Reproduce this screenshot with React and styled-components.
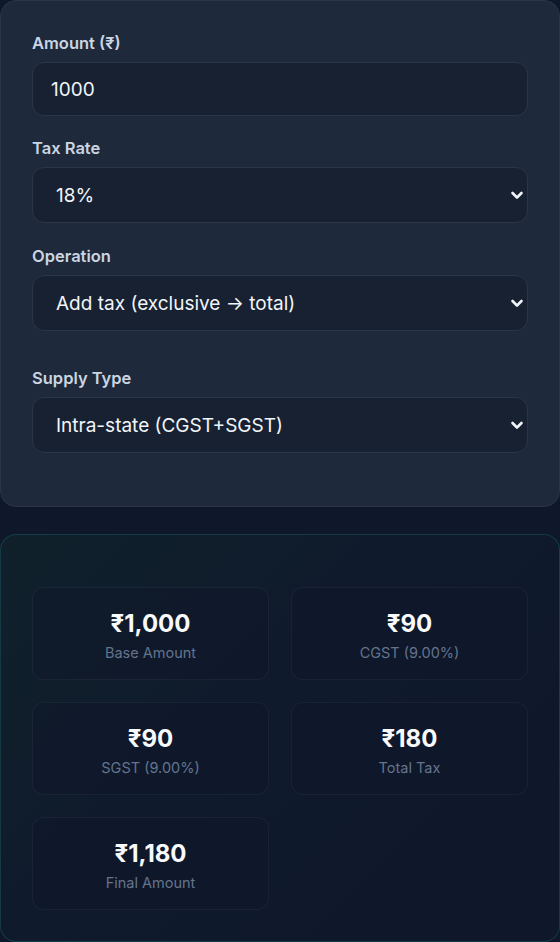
import React, { useState } from 'react'
import styled, { createGlobalStyle } from 'styled-components'

const Global = createGlobalStyle`
  html, body { margin: 0; padding: 0; background: #0f172a; }
  body { font-family: Inter, "Noto Sans", "Liberation Sans", sans-serif; }
  * { box-sizing: border-box; }
`

const Page = styled.div`
  width: 560px;
  min-height: 942px;
  display: flex;
  flex-direction: column;
  gap: 27px;
  background: #0f172a;
`

const FormCard = styled.div`
  background: #1e293b;
  border: 1px solid #2a3547;
  border-radius: 16px;
  padding: 31px 31px 53px;
  display: flex;
  flex-direction: column;
`

const Field = styled.div`
  display: flex;
  flex-direction: column;
  gap: 8px;
  margin-top: ${p => p.$mt || 0}px;
`

const Label = styled.label`
  font-size: 16.5px;
  font-weight: 600;
  color: #cbd5e1;
  line-height: 22px;
`

const Input = styled.input`
  height: 54px;
  width: 100%;
  background: #182131;
  border: 1px solid #2a3547;
  border-radius: 12px;
  color: #f1f5f9;
  font-family: inherit;
  font-size: 19px;
  padding: 0 18px;
  outline: none;
`

const SelectWrap = styled.div`
  position: relative;
`

const Select = styled.select`
  appearance: none;
  height: 56px;
  width: 100%;
  background: #182131;
  border: 1px solid #2a3547;
  border-radius: 12px;
  color: #f1f5f9;
  font-family: inherit;
  font-size: 19px;
  padding: 0 40px 0 23px;
  outline: none;
`

const Chevron = styled.svg`
  position: absolute;
  right: 1px;
  top: 50%;
  transform: translateY(-50%);
  pointer-events: none;
`

const ResultCard = styled.div`
  border: 1px solid rgba(45, 212, 191, 0.18);
  border-radius: 16px;
  background: linear-gradient(135deg, #10212b 0%, #0f1a2c 45%, #0f172a 100%);
  padding: 52px 31px 31px;
`

const Grid = styled.div`
  display: grid;
  grid-template-columns: 1fr 1fr;
  gap: 22px;
`

const Tile = styled.div`
  height: 93px;
  border: 1px solid rgba(148, 163, 184, 0.08);
  border-radius: 12px;
  background: rgba(15, 23, 42, 0.45);
  display: flex;
  flex-direction: column;
  align-items: center;
  gap: 4px;
  padding-top: 21px;
`

const Value = styled.div`
  font-size: 24px;
  font-weight: 700;
  color: #f8fafc;
  line-height: 30px;
`

const Caption = styled.div`
  font-size: 14.5px;
  color: #64748b;
  line-height: 20px;
`

const SelectField = ({ label, value, options, onChange, mt }) => (
  <Field $mt={mt}>
    <Label>{label}</Label>
    <SelectWrap>
      <Select value={value} onChange={e => onChange(e.target.value)}>
        {options.map(o => <option key={o} value={o}>{o}</option>)}
      </Select>
      <Chevron width="20" height="20" viewBox="0 0 20 20">
        <path d="M5.5 8 L10 12.5 L14.5 8" fill="none" stroke="#f1f5f9" strokeWidth="2.6" strokeLinecap="round" strokeLinejoin="round" />
      </Chevron>
    </SelectWrap>
  </Field>
)

const fmt = n => '₹' + n.toLocaleString('en-IN', { maximumFractionDigits: 2 })

export default function App() {
  const [amount, setAmount] = useState('1000')
  const [rate, setRate] = useState('18%')
  const [op, setOp] = useState('Add tax (exclusive → total)')
  const [supply, setSupply] = useState('Intra-state (CGST+SGST)')

  const base = parseFloat(amount) || 0
  const r = parseFloat(rate) / 100
  const tax = base * r
  const half = tax / 2
  const halfRate = (parseFloat(rate) / 2).toFixed(2)

  const tiles = [
    { v: fmt(base), c: 'Base Amount' },
    { v: fmt(half), c: `CGST (${halfRate}%)` },
    { v: fmt(half), c: `SGST (${halfRate}%)` },
    { v: fmt(tax), c: 'Total Tax' },
    { v: fmt(base + tax), c: 'Final Amount' },
  ]

  return (
    <Page>
      <Global />
      <FormCard>
        <Field>
          <Label>Amount (₹)</Label>
          <Input value={amount} onChange={e => setAmount(e.target.value)} />
        </Field>
        <SelectField mt={21} label="Tax Rate" value={rate} onChange={setRate} options={['0%', '5%', '12%', '18%', '28%']} />
        <SelectField mt={22} label="Operation" value={op} onChange={setOp} options={['Add tax (exclusive → total)', 'Remove tax (inclusive → base)']} />
        <SelectField mt={36} label="Supply Type" value={supply} onChange={setSupply} options={['Intra-state (CGST+SGST)', 'Inter-state (IGST)']} />
      </FormCard>
      <ResultCard>
        <Grid>
          {tiles.map(t => (
            <Tile key={t.c}>
              <Value>{t.v}</Value>
              <Caption>{t.c}</Caption>
            </Tile>
          ))}
        </Grid>
      </ResultCard>
    </Page>
  )
}
